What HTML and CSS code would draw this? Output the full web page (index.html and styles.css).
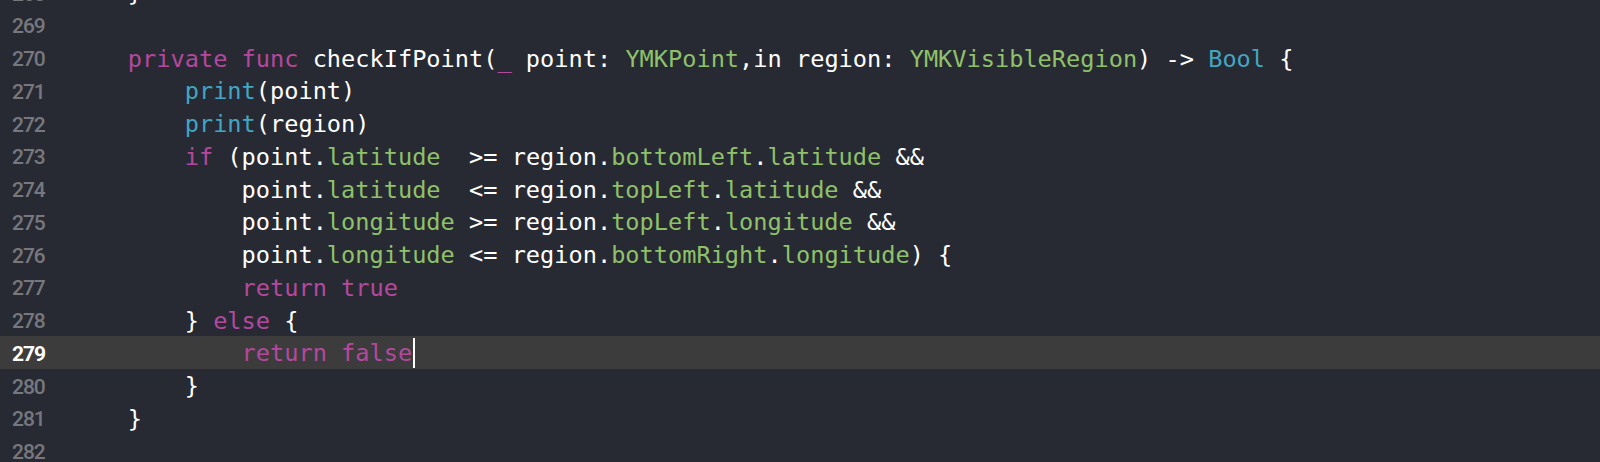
FILE: index.html
```html
<!DOCTYPE html>
<html>
<head>
<meta charset="utf-8">
<link rel="stylesheet" href="styles.css">
</head>
<body>
<div class="editor">
  <div class="row"><span class="ln">268</span><span class="code">    }</span></div>
  <div class="row"><span class="ln">269</span><span class="code"></span></div>
  <div class="row"><span class="ln">270</span><span class="code">    <span class="kw">private</span> <span class="kw">func</span> checkIfPoint(<span class="kw">_</span> point: <span class="ty">YMKPoint</span>,in region: <span class="ty">YMKVisibleRegion</span>) -&gt; <span class="sys">Bool</span> {</span></div>
  <div class="row"><span class="ln">271</span><span class="code">        <span class="sys">print</span>(point)</span></div>
  <div class="row"><span class="ln">272</span><span class="code">        <span class="sys">print</span>(region)</span></div>
  <div class="row"><span class="ln">273</span><span class="code">        <span class="kw">if</span> (point.<span class="ty">latitude</span>  &gt;= region.<span class="ty">bottomLeft</span>.<span class="ty">latitude</span> &amp;&amp;</span></div>
  <div class="row"><span class="ln">274</span><span class="code">            point.<span class="ty">latitude</span>  &lt;= region.<span class="ty">topLeft</span>.<span class="ty">latitude</span> &amp;&amp;</span></div>
  <div class="row"><span class="ln">275</span><span class="code">            point.<span class="ty">longitude</span> &gt;= region.<span class="ty">topLeft</span>.<span class="ty">longitude</span> &amp;&amp;</span></div>
  <div class="row"><span class="ln">276</span><span class="code">            point.<span class="ty">longitude</span> &lt;= region.<span class="ty">bottomRight</span>.<span class="ty">longitude</span>) {</span></div>
  <div class="row"><span class="ln">277</span><span class="code">            <span class="kw">return</span> <span class="kw">true</span></span></div>
  <div class="row"><span class="ln">278</span><span class="code">        } <span class="kw">else</span> {</span></div>
  <div class="row current"><span class="ln">279</span><span class="code">            <span class="kw">return</span> <span class="kw">false</span><span class="caret"></span></span></div>
  <div class="row"><span class="ln">280</span><span class="code">        }</span></div>
  <div class="row"><span class="ln">281</span><span class="code">    }</span></div>
  <div class="row"><span class="ln">282</span><span class="code"></span></div>
</div>
</body>
</html>
```
FILE: styles.css
```css
html, body {
  margin: 0;
  padding: 0;
  background: #282a33;
  overflow: hidden;
}
.editor {
  margin-top: -24.25px;
  display: flex;
  flex-direction: column;
}
.row {
  display: flex;
  align-items: center;
  height: 32.75px;
}
.row.current {
  background: #3c3c3c;
}
.ln {
  width: 44px;
  flex: none;
  box-sizing: border-box;
  padding-left: 12px;
  text-align: left;
  font-family: "Roboto", "Inter", sans-serif;
  font-size: 21px;
  font-weight: 500;
  font-variant-numeric: tabular-nums;
  color: #77787d;
  padding-top: 3px;
  letter-spacing: -1px;
}
.current .ln {
  color: #ffffff;
  font-weight: 700;
}
.code {
  display: block;
  margin-left: 27px;
  white-space: pre;
  font-family: "DejaVu Sans Mono", monospace;
  font-size: 23.62px;
  line-height: 32px;
  color: #ffffff;
  padding-top: 2px;
}
.kw { color: #b5489e; }
.ty { color: #8ec16a; }
.sys { color: #41a6c4; }
.caret {
  display: inline-block;
  width: 2px;
  height: 30px;
  background: #ffffff;
  margin-left: 1px;
  vertical-align: -7px;
}
```
